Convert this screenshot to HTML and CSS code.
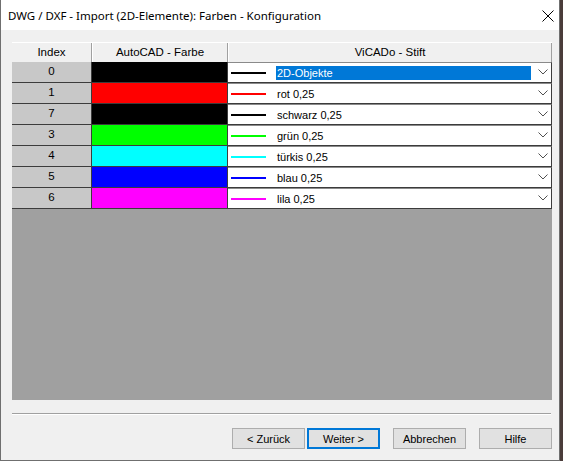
FILE: index.html
```html
<!DOCTYPE html>
<html>
<head>
<meta charset="utf-8">
<link rel="stylesheet" href="styles.css">
</head>
<body>
<div class="window">
  <div class="titlebar">
    <span class="title">DWG / DXF - Import (2D-Elemente): Farben - Konfiguration</span>
    <svg class="close" width="12" height="12" viewBox="0 0 12 12"><path d="M0.5 0.5 L11.5 11.5 M11.5 0.5 L0.5 11.5" stroke="#000" stroke-width="1" fill="none"/></svg>
  </div>
  <div class="content">
    <div class="grid">
      <div class="head">
        <div class="hcell c1">Index</div>
        <div class="hcell c2">AutoCAD - Farbe</div>
        <div class="hcell c3">ViCADo - Stift</div>
      </div>
      <div class="row">
        <div class="idx">0</div>
        <div class="swatch" style="background:#000000"></div>
        <div class="combo"><span class="line" style="background:#000000"></span><span class="txt sel">2D-Objekte</span><svg class="chev" width="10" height="6" viewBox="0 0 10 6"><path d="M0.5 0.5 L5 5 L9.5 0.5" stroke="#505050" fill="none"/></svg></div>
      </div>
      <div class="row">
        <div class="idx">1</div>
        <div class="swatch" style="background:#ff0000"></div>
        <div class="combo"><span class="line" style="background:#ff0000"></span><span class="txt">rot 0,25</span><svg class="chev" width="10" height="6" viewBox="0 0 10 6"><path d="M0.5 0.5 L5 5 L9.5 0.5" stroke="#505050" fill="none"/></svg></div>
      </div>
      <div class="row">
        <div class="idx">7</div>
        <div class="swatch" style="background:#000000"></div>
        <div class="combo"><span class="line" style="background:#000000"></span><span class="txt">schwarz 0,25</span><svg class="chev" width="10" height="6" viewBox="0 0 10 6"><path d="M0.5 0.5 L5 5 L9.5 0.5" stroke="#505050" fill="none"/></svg></div>
      </div>
      <div class="row">
        <div class="idx">3</div>
        <div class="swatch" style="background:#00ff00"></div>
        <div class="combo"><span class="line" style="background:#00ff00"></span><span class="txt">grün 0,25</span><svg class="chev" width="10" height="6" viewBox="0 0 10 6"><path d="M0.5 0.5 L5 5 L9.5 0.5" stroke="#505050" fill="none"/></svg></div>
      </div>
      <div class="row">
        <div class="idx">4</div>
        <div class="swatch" style="background:#00ffff"></div>
        <div class="combo"><span class="line" style="background:#00ffff"></span><span class="txt">türkis 0,25</span><svg class="chev" width="10" height="6" viewBox="0 0 10 6"><path d="M0.5 0.5 L5 5 L9.5 0.5" stroke="#505050" fill="none"/></svg></div>
      </div>
      <div class="row">
        <div class="idx">5</div>
        <div class="swatch" style="background:#0000ff"></div>
        <div class="combo"><span class="line" style="background:#0000ff"></span><span class="txt">blau 0,25</span><svg class="chev" width="10" height="6" viewBox="0 0 10 6"><path d="M0.5 0.5 L5 5 L9.5 0.5" stroke="#505050" fill="none"/></svg></div>
      </div>
      <div class="row">
        <div class="idx">6</div>
        <div class="swatch" style="background:#ff00ff"></div>
        <div class="combo"><span class="line" style="background:#ff00ff"></span><span class="txt">lila 0,25</span><svg class="chev" width="10" height="6" viewBox="0 0 10 6"><path d="M0.5 0.5 L5 5 L9.5 0.5" stroke="#505050" fill="none"/></svg></div>
      </div>
    </div>
    <div class="sep"></div>
    <div class="buttons">
      <div class="btn b1">&lt; Zurück</div>
      <div class="btn b2 default">Weiter &gt;</div>
      <div class="btn b3">Abbrechen</div>
      <div class="btn b4">Hilfe</div>
    </div>
  </div>
</div>
</body>
</html>
```
FILE: styles.css
```css
html, body {
  margin: 0;
  padding: 0;
}
body {
  background: #4a3c3a;
  width: 563px;
  height: 461px;
  overflow: hidden;
}
.window {
  width: 560px;
  height: 461px;
  box-sizing: border-box;
  border: 1px solid #6f6f6f;
  border-top: none;
  background: #f0f0f0;
  display: flex;
  flex-direction: column;
}
.titlebar {
  height: 30px;
  background: #ffffff;
  display: flex;
  align-items: center;
  justify-content: space-between;
  padding: 0 5px 0 7px;
  flex-shrink: 0;
}
.title {
  font-family: "Noto Sans", sans-serif;
  font-size: 11.5px;
  color: #000;
  padding-top: 1px;
}
.close {
  display: block;
  margin-top: 1px;
}
.content {
  padding: 12px 7px 0 11px;
  font-family: "Liberation Sans", Arial, sans-serif;
  font-size: 11px;
  color: #000;
}
.grid {
  width: 540px;
  height: 358px;
  background: #a0a0a0;
  display: flex;
  flex-direction: column;
}
.head {
  display: grid;
  grid-template-columns: 80px 136px 324px;
  height: 20px;
  background: #f0f0f0;
  box-sizing: border-box;
  border-top: 1px solid #ffffff;
  font-size: 11.5px;
}
.hcell {
  display: flex;
  align-items: center;
  justify-content: center;
  box-sizing: border-box;
  border-right: 1px solid #a0a0a0;
  border-left: 1px solid #ffffff;
  padding-bottom: 1px;
}
.hcell.c1 {
  border-left: none;
}
.row {
  display: grid;
  grid-template-columns: 80px 136px 324px;
  height: 21px;
  box-sizing: border-box;
  border-bottom: 1px solid #3c3c3c;
}
.idx {
  background: #c8c8c8;
  text-align: center;
  line-height: 19px;
  font-size: 11.5px;
  border-right: 1px solid #3c3c3c;
}
.swatch {
  border-right: 1px solid #3c3c3c;
}
.combo {
  background: #ffffff;
  box-sizing: border-box;
  border-right: 1px solid #3c3c3c;
  border-top: 1px solid #8a8a8a;
  display: flex;
  align-items: center;
  padding-left: 3px;
  position: relative;
}
.line {
  width: 35px;
  height: 2px;
  flex-shrink: 0;
}
.txt {
  margin-left: 10px;
  font-size: 11px;
  line-height: 14px;
  padding: 0 1px;
}
.txt.sel {
  background: #0078d7;
  color: #ffffff;
  width: 253px;
}
.chev {
  position: absolute;
  right: 3px;
  top: 6px;
}
.sep {
  width: 539px;
  height: 1px;
  background: #a0a0a0;
  border-bottom: 1px solid #ffffff;
  margin-top: 13px;
}
.buttons {
  display: flex;
  justify-content: flex-start;
  padding-left: 220px;
  margin-top: 13px;
}
.btn {
  width: 73px;
  height: 21px;
  box-sizing: border-box;
  border: 1px solid #adadad;
  background: #e1e1e1;
  display: flex;
  align-items: center;
  justify-content: center;
}
.btn.b2 {
  margin-left: 2px;
  border: 2px solid #0078d7;
}
.btn.b3 {
  margin-left: 13px;
}
.btn.b4 {
  margin-left: 13px;
}
```
